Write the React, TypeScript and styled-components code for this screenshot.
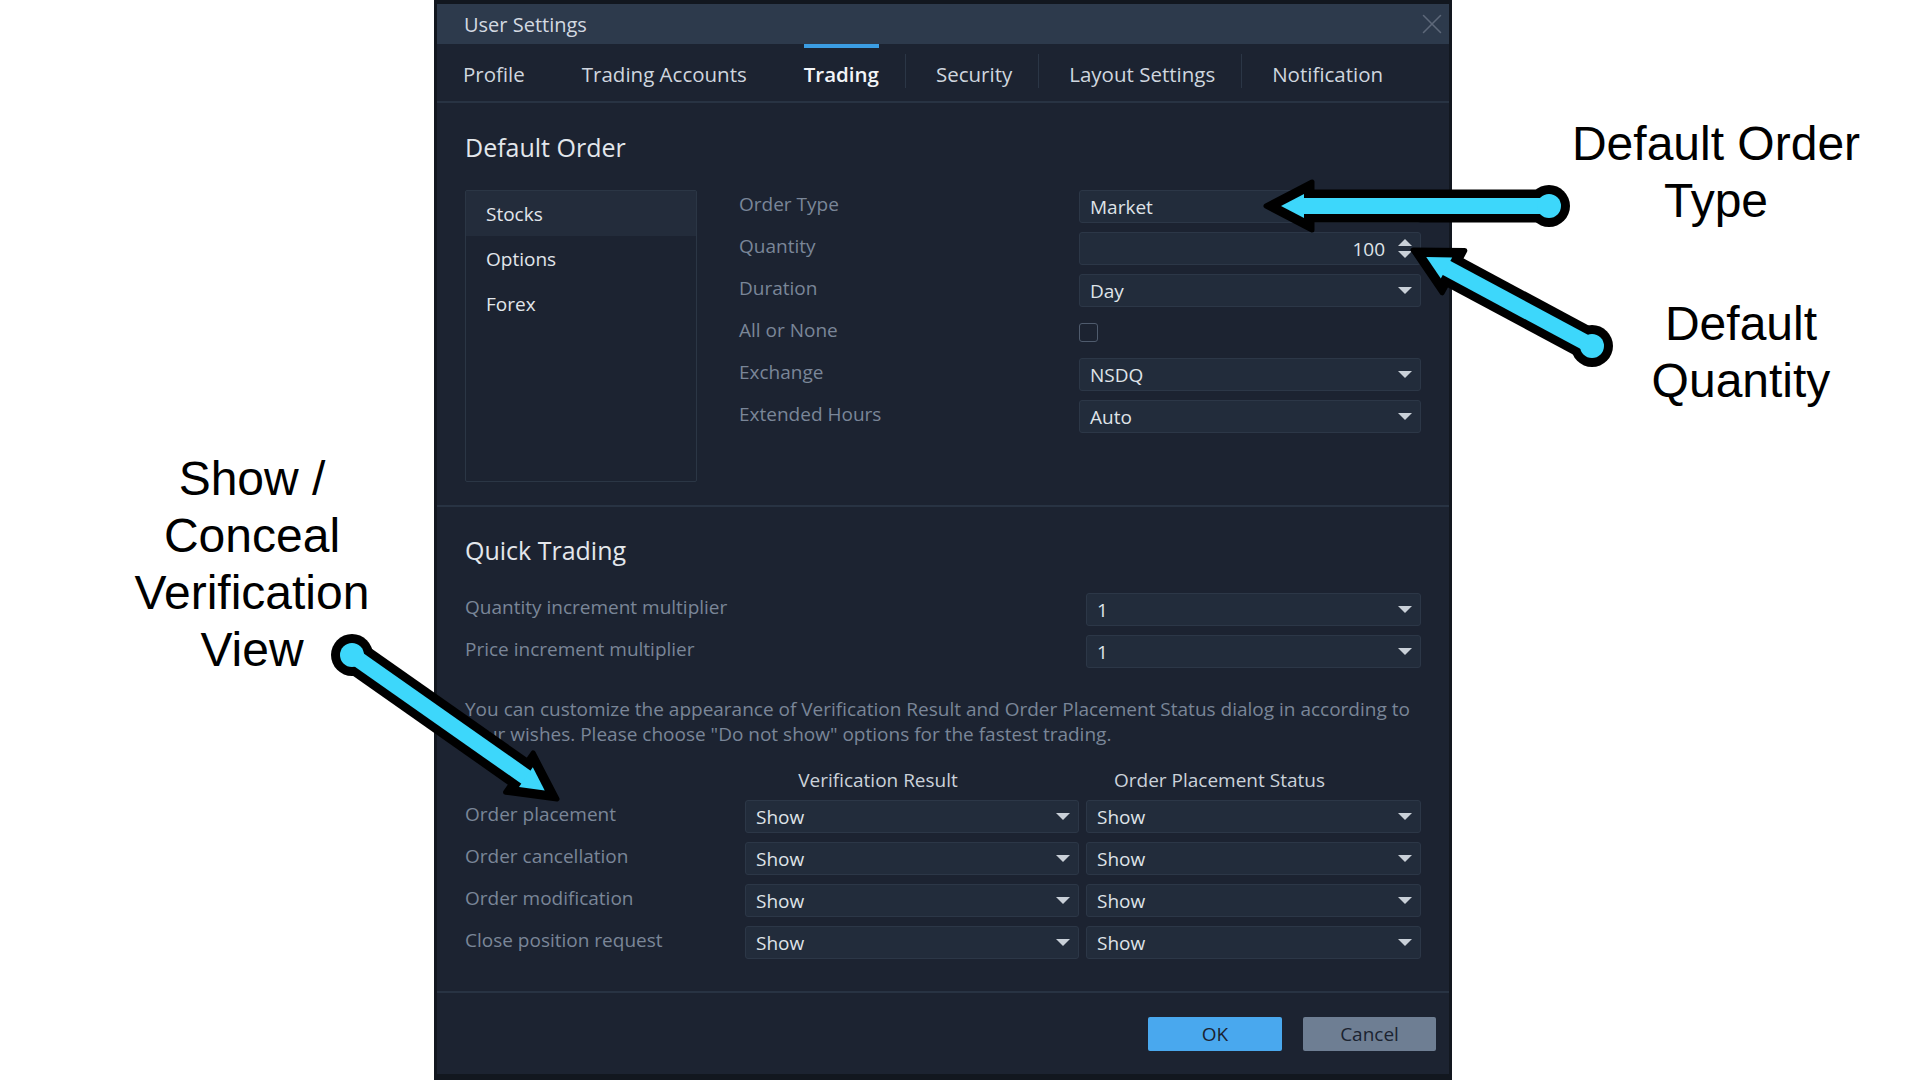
import React from "react";
import styled, { createGlobalStyle } from "styled-components";
import { X } from "lucide-react";

const GlobalStyle = createGlobalStyle`
  html, body {
    margin: 0;
    padding: 0;
    background: #ffffff;
  }
  body {
    font-family: "Open Sans", "Noto Sans", sans-serif;
  }
  * {
    box-sizing: border-box;
  }
`;

const Page = styled.div`
  position: relative;
  width: 1920px;
  height: 1080px;
  display: flex;
  overflow: hidden;
  background: #ffffff;
`;

const NoteColumn = styled.div<{ $width?: number; $top: number }>`
  width: ${(p) => (p.$width ? `${p.$width}px` : "auto")};
  flex: ${(p) => (p.$width ? "none" : "1")};
  display: flex;
  flex-direction: column;
  padding-top: ${(p) => p.$top}px;
`;

const NoteText = styled.div<{ $shift: number; $gap?: number }>`
  width: 360px;
  margin-left: ${(p) => p.$shift}px;
  margin-top: ${(p) => p.$gap || 0}px;
  font-family: "Liberation Sans", Arial, sans-serif;
  font-size: 48px;
  line-height: 57px;
  color: #000000;
  text-align: center;
`;

const Backdrop = styled.div`
  width: 1018px;
  flex: none;
  background: #12171f;
  padding: 4px 3px 6px 3px;
  display: flex;
  flex-direction: column;
`;

const Dialog = styled.div`
  flex: 1;
  background: #1c2331;
  display: flex;
  flex-direction: column;
`;

const TitleBar = styled.div`
  height: 40px;
  background: #2d3a4c;
  display: flex;
  align-items: center;
  justify-content: space-between;
  padding-left: 27px;
  font-size: 20px;
  color: #d3d9e1;
  svg {
    color: #5d6879;
  }
`;

const TabBar = styled.div`
  height: 59px;
  display: flex;
  align-items: stretch;
  padding-left: 26px;
  border-bottom: 2px solid #283343;
`;

const Tab = styled.div<{ $active?: boolean }>`
  display: flex;
  align-items: center;
  padding-bottom: 2px;
  border-top: 4px solid ${(p) => (p.$active ? "#3b9de3" : "transparent")};
  font-size: 20.5px;
  font-weight: ${(p) => (p.$active ? 600 : 400)};
  color: ${(p) => (p.$active ? "#f2f5f8" : "#cfd6df")};
  white-space: nowrap;
`;

const TabDivider = styled.div<{ $visible?: boolean }>`
  width: 1px;
  margin: 10px 30px 13px 26px;
  background: ${(p) => (p.$visible ? "#2b3646" : "transparent")};
`;

const Section = styled.div<{ $top: number; $bottom: number }>`
  padding: ${(p) => p.$top}px 28px ${(p) => p.$bottom}px;
  border-bottom: 2px solid #283343;
`;

const SectionTitle = styled.h2`
  margin: 0 0 26px;
  font-size: 25px;
  line-height: 34px;
  font-weight: 400;
  color: #e3e7ec;
`;

const OrderLayout = styled.div`
  display: flex;
  gap: 42px;
  align-items: flex-start;
`;

const CategoryList = styled.div`
  width: 232px;
  height: 292px;
  border: 1px solid #2b3645;
  border-radius: 2px;
  display: flex;
  flex-direction: column;
`;

const CategoryItem = styled.div<{ $active?: boolean }>`
  height: 45px;
  display: flex;
  align-items: center;
  padding-left: 20px;
  font-size: 19px;
  color: #e2e6eb;
  background: ${(p) => (p.$active ? "#232c3b" : "transparent")};
`;

const FormGrid = styled.div<{ $cols: string; $gap?: number }>`
  display: grid;
  grid-template-columns: ${(p) => p.$cols};
  grid-auto-rows: 33px;
  row-gap: 9px;
  column-gap: ${(p) => (p.$gap === undefined ? 7 : p.$gap)}px;
  align-items: center;
`;

const FieldLabel = styled.div`
  font-size: 19px;
  line-height: 25px;
  padding-bottom: 4px;
  color: #7a8698;
  white-space: nowrap;
`;

const Field = styled.div`
  height: 33px;
  display: flex;
  align-items: center;
  gap: 13px;
  padding: 0 8px 0 10px;
  background: #222c3b;
  border: 1px solid #2c3747;
  border-radius: 3px;
  font-size: 19px;
  color: #dfe3e8;
`;

const FieldValue = styled.span<{ $numeric?: boolean }>`
  flex: 1;
  text-align: ${(p) => (p.$numeric ? "right" : "left")};
  white-space: nowrap;
`;

const Caret = styled.span<{ $up?: boolean }>`
  width: 0;
  height: 0;
  border-left: 7px solid transparent;
  border-right: 7px solid transparent;
  border-top: ${(p) => (p.$up ? "0" : "7px solid #c9d0d8")};
  border-bottom: ${(p) => (p.$up ? "7px solid #c9d0d8" : "0")};
`;

const Spinner = styled.span`
  display: flex;
  flex-direction: column;
  gap: 5px;
`;

const Checkbox = styled.span`
  width: 19px;
  height: 19px;
  border: 1.5px solid #4f5b6d;
  border-radius: 3px;
`;

const Note = styled.p`
  margin: 29px 0 0;
  font-size: 19px;
  line-height: 25px;
  color: #7a8698;
`;

const HeaderRow = styled.div`
  display: grid;
  grid-template-columns: 273px 334px 335px;
  column-gap: 7px;
  margin: 21px 0 7px;
`;

const ColumnHeader = styled.div`
  padding-right: 68px;
  font-size: 19px;
  line-height: 25px;
  text-align: center;
  white-space: nowrap;
  color: #cbd2da;
`;

const Footer = styled.div`
  display: flex;
  justify-content: flex-end;
  gap: 21px;
  padding: 24px 13px 23px;
`;

const Button = styled.button<{ $primary?: boolean }>`
  width: ${(p) => (p.$primary ? 134 : 133)}px;
  height: 34px;
  border: none;
  border-radius: 2px;
  font-family: inherit;
  font-size: 19px;
  color: #1b2330;
  background: ${(p) => (p.$primary ? "#49a8ee" : "#6e7e93")};
`;

const ArrowLayer = styled.svg`
  position: absolute;
  inset: 0;
  pointer-events: none;
`;

type Pt = [number, number];

const CYAN = "#3dd7fb";

// callout arrow: black outlined cyan shaft, round tail, triangular head
const Arrow = ({ from, to }: { from: Pt; to: Pt }) => {
  const dx = to[0] - from[0];
  const dy = to[1] - from[1];
  const len = Math.hypot(dx, dy);
  const ux = dx / len;
  const uy = dy / len;
  const px = -uy;
  const py = ux;
  const at = (back: number, side: number) => `${to[0] - ux * back + px * side},${to[1] - uy * back + py * side}`;
  const outer = [at(0, 0), at(46, 24), at(46, -24)].join(" ");
  const inner = [at(15, 0), at(38, 12), at(38, -12)].join(" ");
  const end = (back: number) => ({ x2: to[0] - ux * back, y2: to[1] - uy * back });
  return (
    <g>
      <line x1={from[0]} y1={from[1]} {...end(30)} stroke="#000" strokeWidth={33} />
      <circle cx={from[0]} cy={from[1]} r={21} fill="#000" />
      <polygon points={outer} fill="#000" stroke="#000" strokeWidth={5} strokeLinejoin="round" />
      <line x1={from[0]} y1={from[1]} {...end(34)} stroke={CYAN} strokeWidth={16} />
      <polygon points={inner} fill={CYAN} />
      <circle cx={from[0]} cy={from[1]} r={12} fill={CYAN} />
    </g>
  );
};

const tabs = [
  { label: "Profile", divider: false },
  { label: "Trading Accounts", divider: false },
  { label: "Trading", divider: true, active: true },
  { label: "Security", divider: true },
  { label: "Layout Settings", divider: true },
  { label: "Notification", divider: false },
];

const statusRows = ["Order placement", "Order cancellation", "Order modification", "Close position request"];

const Select = ({ value }: { value: string }) => (
  <Field>
    <FieldValue>{value}</FieldValue>
    <Caret />
  </Field>
);

const App = () => {
  return (
    <Page>
      <GlobalStyle />
      <NoteColumn $width={434} $top={450}>
        <NoteText $shift={72}>
          Show /<br />
          Conceal<br />
          Verification<br />
          View
        </NoteText>
      </NoteColumn>

      <Backdrop>
        <Dialog>
          <TitleBar>
            <span>User Settings</span>
            <X size={34} strokeWidth={1.1} />
          </TitleBar>

          <TabBar>
            {tabs.map((t, i) => (
              <React.Fragment key={t.label}>
                <Tab $active={t.active}>{t.label}</Tab>
                {i < tabs.length - 1 && <TabDivider $visible={t.divider} />}
              </React.Fragment>
            ))}
          </TabBar>

          <Section $top={27} $bottom={23}>
            <SectionTitle>Default Order</SectionTitle>
            <OrderLayout>
              <CategoryList>
                <CategoryItem $active>Stocks</CategoryItem>
                <CategoryItem>Options</CategoryItem>
                <CategoryItem>Forex</CategoryItem>
              </CategoryList>
              <FormGrid $cols="340px 342px" $gap={0}>
                <FieldLabel>Order Type</FieldLabel>
                <Field>
                  <FieldValue>Market</FieldValue>
                </Field>
                <FieldLabel>Quantity</FieldLabel>
                <Field>
                  <FieldValue $numeric>100</FieldValue>
                  <Spinner>
                    <Caret $up />
                    <Caret />
                  </Spinner>
                </Field>
                <FieldLabel>Duration</FieldLabel>
                <Select value="Day" />
                <FieldLabel>All or None</FieldLabel>
                <Checkbox />
                <FieldLabel>Exchange</FieldLabel>
                <Select value="NSDQ" />
                <FieldLabel>Extended Hours</FieldLabel>
                <Select value="Auto" />
              </FormGrid>
            </OrderLayout>
          </Section>

          <Section $top={26} $bottom={32}>
            <SectionTitle>Quick Trading</SectionTitle>
            <FormGrid $cols="614px 335px">
              <FieldLabel>Quantity increment multiplier</FieldLabel>
              <Select value="1" />
              <FieldLabel>Price increment multiplier</FieldLabel>
              <Select value="1" />
            </FormGrid>
            <Note>
              You can customize the appearance of Verification Result and Order Placement Status dialog in according to
              your wishes. Please choose "Do not show" options for the fastest trading.
            </Note>
            <HeaderRow>
              <span />
              <ColumnHeader>Verification Result</ColumnHeader>
              <ColumnHeader>Order Placement Status</ColumnHeader>
            </HeaderRow>
            <FormGrid $cols="273px 334px 335px">
              {statusRows.map((r) => (
                <React.Fragment key={r}>
                  <FieldLabel>{r}</FieldLabel>
                  <Select value="Show" />
                  <Select value="Show" />
                </React.Fragment>
              ))}
            </FormGrid>
          </Section>

          <Footer>
            <Button $primary>OK</Button>
            <Button>Cancel</Button>
          </Footer>
        </Dialog>
      </Backdrop>

      <NoteColumn $top={115}>
        <NoteText $shift={84}>
          Default Order<br />
          Type
        </NoteText>
        <NoteText $shift={109} $gap={66}>
          Default<br />
          Quantity
        </NoteText>
      </NoteColumn>

      <ArrowLayer width={1920} height={1080} viewBox="0 0 1920 1080">
        <Arrow from={[1549, 206]} to={[1266, 206]} />
        <Arrow from={[1592, 346]} to={[1413, 250]} />
        <Arrow from={[352, 655]} to={[557, 799]} />
      </ArrowLayer>
    </Page>
  );
};

export default App;
